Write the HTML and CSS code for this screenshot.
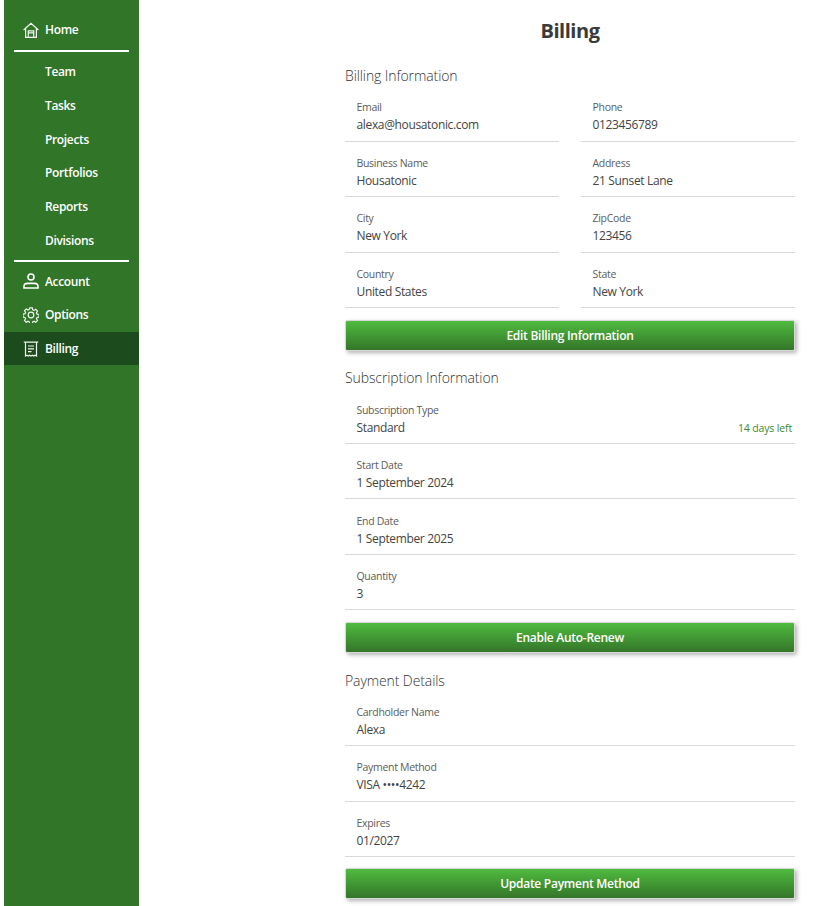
FILE: index.html
```html
<!DOCTYPE html>
<html lang="en">
<head>
<meta charset="utf-8">
<title>Billing</title>
<link rel="stylesheet" href="styles.css">
</head>
<body>
<div class="app">
  <nav class="side">
    <a class="item"><svg class="ic" viewBox="0 0 16 16"><path d="M.6 8 8 1.200 15.400 8M2.600 6.400V15.300h10.800V6.400M5.300 15.300V8.800h5.400v6.500M5.300 10.800h5.400"/></svg><span>Home</span></a>
    <hr class="rule">
    <a class="item"><span>Team</span></a>
    <a class="item"><span>Tasks</span></a>
    <a class="item"><span>Projects</span></a>
    <a class="item"><span>Portfolios</span></a>
    <a class="item"><span>Reports</span></a>
    <a class="item"><span>Divisions</span></a>
    <hr class="rule low">
    <a class="item"><svg class="ic thick" viewBox="0 0 16 16"><circle cx="8" cy="4" r="3"/><path d="M1 15v-1.600c0-2 1.500-3 3.500-3h7c2 0 3.500 1 3.500 3V15z"/></svg><span>Account</span></a>
    <a class="item"><svg class="ic" viewBox="0 0 16 16"><circle cx="8" cy="8" r="2.800"/><path d="M6.700.8h2.600l.4 2 1.300.6 1.700-1.100 1.800 1.800-1.100 1.700.6 1.300 2 .4v2.600l-2 .4-.6 1.300 1.100 1.700-1.800 1.800-1.700-1.100-1.300.6-.4 2H6.700l-.4-2-1.300-.6-1.700 1.100-1.800-1.800 1.100-1.700-.6-1.300-2-.4V7.100l2-.4.600-1.300-1.100-1.700 1.800-1.800L5 3l1.300-.6z"/></svg><span>Options</span></a>
    <a class="item active"><svg class="ic" viewBox="0 0 16 16"><path d="M.8 1.200h14.400M2.500 1.200v13.800l1.500-.8 1.300.8 1.300-.8 1.400.8 1.400-.8 1.300.8 1.300-.8 1.500.8V1.200M5 5h6M5 7.800h6M5 10.600h3.500"/></svg><span>Billing</span></a>
  </nav>
  <main class="main">
    <h1 class="title">Billing</h1>

    <h2 class="sec first">Billing Information</h2>
    <div class="grid">
      <div class="field"><div class="lab">Email</div><div class="val">alexa@housatonic.com</div></div>
      <div class="field"><div class="lab">Phone</div><div class="val">0123456789</div></div>
      <div class="field"><div class="lab">Business Name</div><div class="val">Housatonic</div></div>
      <div class="field"><div class="lab">Address</div><div class="val">21 Sunset Lane</div></div>
      <div class="field"><div class="lab">City</div><div class="val">New York</div></div>
      <div class="field"><div class="lab">ZipCode</div><div class="val">123456</div></div>
      <div class="field"><div class="lab">Country</div><div class="val">United States</div></div>
      <div class="field"><div class="lab">State</div><div class="val">New York</div></div>
    </div>
    <button class="btn">Edit Billing Information</button>

    <h2 class="sec">Subscription Information</h2>
    <div class="field"><div class="lab">Subscription Type</div><div class="val split"><span>Standard</span><span class="left">14 days left</span></div></div>
    <div class="field"><div class="lab">Start Date</div><div class="val">1 September 2024</div></div>
    <div class="field"><div class="lab">End Date</div><div class="val">1 September 2025</div></div>
    <div class="field"><div class="lab">Quantity</div><div class="val">3</div></div>
    <button class="btn">Enable Auto-Renew</button>

    <h2 class="sec">Payment Details</h2>
    <div class="field"><div class="lab">Cardholder Name</div><div class="val">Alexa</div></div>
    <div class="field"><div class="lab">Payment Method</div><div class="val">VISA ••••4242</div></div>
    <div class="field"><div class="lab">Expires</div><div class="val">01/2027</div></div>
    <button class="btn last">Update Payment Method</button>
  </main>
</div>
</body>
</html>
```
FILE: styles.css
```css
* { box-sizing: border-box; }
html, body { margin: 0; height: 100%; }
body {
  font-family: "Open Sans", "Noto Sans", sans-serif;
  color: #333;
  background: #fff;
  overflow: hidden;
}
.app { display: flex; height: 906px; padding-left: 4px; }
.side {
  width: 135px;
  flex: none;
  background: #317529;
  padding-top: 12.700px;
  display: flex;
  flex-direction: column;
}
.item {
  height: 33.700px;
  flex: none;
  display: flex;
  align-items: center;
  padding-left: 18.500px;
  color: #fff;
  font-size: 12px;
  font-weight: 600;
  letter-spacing: -0.35px;
}
.item span { margin-left: 22.500px; }
.item .ic + span { margin-left: 6.500px; }
.item.active { background: #1c4b1d; }
.ic {
  width: 16px;
  height: 16px;
  flex: none;
  fill: none;
  stroke: #f2f7f1;
  stroke-width: 1.200;
}
.ic.thick { stroke-width: 1.600; stroke: #fff; }
.rule {
  flex: none;
  border: 0;
  height: 2px;
  background: #fff;
  margin: 3.500px 10px 3px;
  width: 115px;
}
.rule.low { margin: 2.700px 10px; }
.main { width: 450px; margin-left: 206px; flex: none; }
.title {
  margin: 17px 0 0;
  text-align: center;
  font-size: 20px;
  line-height: 28px;
  font-weight: 700;
  color: #3a3a3a;
  letter-spacing: -0.45px;
}
.sec {
  margin: 17.750px 0 0;
  font-size: 14px;
  line-height: 20px;
  font-weight: 300;
  color: #333;
  letter-spacing: -0.1px;
}
.sec.first { margin-top: 21px; }
.grid { display: grid; grid-template-columns: 214px 214px; column-gap: 22px; }
.field {
  height: 55.500px;
  padding: 14.300px 0 0 11.500px;
  border-bottom: 1px solid #d9d9d9;
}
.sec + .field { padding-top: 14.500px; }
.lab { font-size: 10.500px; line-height: 15px; color: #5c5c5c; letter-spacing: -0.3px; }
.val { font-size: 12px; line-height: 20px; color: #444; letter-spacing: -0.35px; }
.split { display: flex; justify-content: space-between; }
.left { font-size: 10.500px; color: #3c8a2e; padding-right: 3px; letter-spacing: -0.15px; }
.btn {
  display: block;
  width: 100%;
  height: 31px;
  margin-top: 11.500px;
  border: 1px solid #d8d8d8;
  border-radius: 2px;
  background: linear-gradient(#4fbb3f, #347529);
  color: #fff;
  font-family: inherit;
  font-size: 12px;
  font-weight: 600;
  letter-spacing: -0.27px;
  box-shadow: 2px 2px 4px rgba(0, 0, 0, 0.3);
}
.btn.last { margin-top: 11px; }
```
